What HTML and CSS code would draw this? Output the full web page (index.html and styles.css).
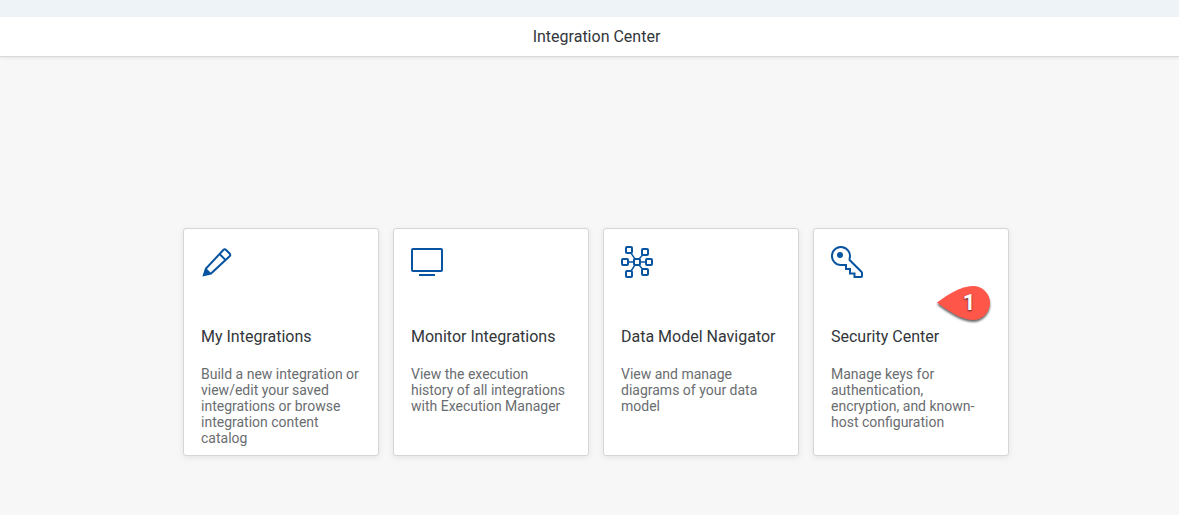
FILE: index.html
```
<!DOCTYPE html>
<html lang="en">
<head>
<meta charset="utf-8">
<meta name="viewport" content="width=device-width, initial-scale=1">
<title>Integration Center</title>
<link rel="stylesheet" href="styles.css">
</head>
<body>
<div class="shell-strip"></div>
<header class="page-header"><h1 class="page-title">Integration Center</h1></header>
<main class="tiles">
  <a class="tile" href="#my-integrations">
    <svg class="tile-icon" viewBox="0 0 32 32" aria-hidden="true">
      <path d="M2.8 29.2 5 22.5 22.3 4q1.4-1.4 2.8 0l3.500 3.500q1.300 1.400 0 2.800L10 27.500ZM18.600 8l5.800 5.900"/>
      <path class="solid" d="m4.500 21.500 6 6-8.200 2.200Z"/>
    </svg>
    <h2 class="tile-title">My Integrations</h2>
    <p class="tile-text">Build a new integration or view/edit your saved integrations or browse integration content catalog</p>
  </a>
  <a class="tile" href="#monitor">
    <svg class="tile-icon" viewBox="0 0 32 32" aria-hidden="true">
      <rect x="1" y="3" width="30" height="22" rx="1"/>
      <path d="M8 29h16"/>
    </svg>
    <h2 class="tile-title">Monitor Integrations</h2>
    <p class="tile-text">View the execution history of all integrations with Execution Manager</p>
  </a>
  <a class="tile" href="#data-model">
    <svg class="tile-icon" viewBox="0 0 32 32" aria-hidden="true">
      <path class="thin" d="M7 16h6M19 16h6M10.300 7.500 14 13M22 8.500 18 13M10 25l4-6M22 23.500 18 19"/>
      <rect x="5" y="1" width="6" height="6" rx="1"/>
      <rect x="21" y="3" width="6" height="6" rx="1"/>
      <rect x="1" y="13" width="6" height="6" rx="1"/>
      <rect x="13" y="13" width="6" height="6" rx="1"/>
      <rect x="25" y="13" width="6" height="6" rx="1"/>
      <rect x="5" y="25" width="6" height="6" rx="1"/>
      <rect x="21" y="23" width="6" height="6" rx="1"/>
    </svg>
    <h2 class="tile-title">Data Model Navigator</h2>
    <p class="tile-text">View and manage diagrams of your data model</p>
  </a>
  <a class="tile" href="#security">
    <svg class="tile-icon" viewBox="0 0 32 32" aria-hidden="true">
      <path d="M10 19A9 9 0 1 1 18.600 12.500V14L30.600 26Q31 26.500 31 27v3q0 1-1 1h-6.500V27.500H19V23H15V19Z"/>
      <circle class="dot" cx="9" cy="9" r="3"/>
    </svg>
    <h2 class="tile-title">Security Center</h2>
    <p class="tile-text">Manage keys for authentication, encryption, and known-host configuration</p>
    <span class="marker">
      <svg class="marker-shape" viewBox="0 0 54 37" aria-hidden="true">
        <path d="M0 17.500C10 10 24 1 36 1a17 17 0 0 1 0 34C24 35 10 25 0 17.500Z"/>
      </svg>
      <span class="marker-number">1</span>
    </span>
  </a>
</main>
</body>
</html>
```
FILE: styles.css
```
* { box-sizing: border-box; }

body {
  margin: 0;
  min-height: 100vh;
  background: #f7f7f7;
  color: #32363a;
  font-family: Roboto, "Noto Sans", sans-serif;
}

.shell-strip {
  height: 17px;
  background: #eef3f8;
}

.page-header {
  display: flex;
  align-items: center;
  justify-content: center;
  height: 39px;
  padding-left: 14px;
  background: #fff;
  box-shadow: 0 1px 0 #d9d9d9, 0 2px 3px rgba(0, 0, 0, 0.08);
}

.page-title,
.tile-title {
  margin: 0;
  font-size: 16px;
  font-weight: 400;
  line-height: 20px;
}

.tiles {
  display: flex;
  flex-wrap: wrap;
  justify-content: center;
  gap: 14px;
  padding: 172px 0 40px 13px;
}

.tile {
  position: relative;
  display: flex;
  flex-direction: column;
  width: 196px;
  min-height: 228px;
  padding: 17px;
  padding-bottom: 8px;
  border: 1px solid #d5d5d5;
  border-radius: 3px;
  background: #fff;
  box-shadow: 0 2px 6px rgba(0, 0, 0, 0.08);
  color: inherit;
  text-decoration: none;
}

.tile-icon {
  width: 32px;
  height: 32px;
  margin-bottom: 49px;
  fill: none;
  stroke: #0854a0;
  stroke-width: 2;
}

.tile-icon .thin { stroke-width: 1.4; }
.tile-icon .solid,
.tile-icon .dot { fill: #0854a0; stroke: none; }

.tile-text {
  margin: 19px 0 0;
  color: #6a6d70;
  font-size: 14px;
  line-height: 16px;
}

.marker {
  position: absolute;
  top: 56px;
  right: 17px;
  width: 54px;
  height: 37px;
}

.marker-shape {
  display: block;
  overflow: visible;
  fill: #ff564a;
  filter: drop-shadow(0 2px 1px rgba(0, 0, 0, 0.6));
}

.marker-number {
  position: absolute;
  inset: 0 0 0 10px;
  color: #fff;
  font: 700 22px/36px Roboto, sans-serif;
  text-align: center;
  text-shadow: 0 1px 2px rgba(0, 0, 0, 0.7);
}
```
